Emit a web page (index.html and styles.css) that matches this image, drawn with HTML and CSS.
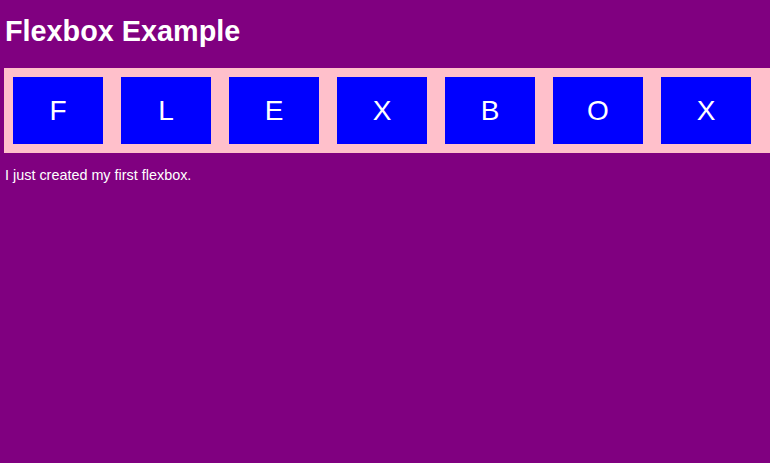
FILE: index.html
```html
<!DOCTYPE html>
<html>
<head>
<meta charset="utf-8">
<link rel="stylesheet" href="styles.css">
</head>
<body>
<h1 class="title">Flexbox Example</h1>
<div class="flex">
  <div class="box">F</div>
  <div class="box">L</div>
  <div class="box">E</div>
  <div class="box">X</div>
  <div class="box">B</div>
  <div class="box">O</div>
  <div class="box">X</div>
</div>
<p class="note">I just created my first flexbox.</p>
</body>
</html>
```
FILE: styles.css
```css
html, body {
  margin: 0;
  background: #800080;
  height: 100%;
}
body {
  padding: 0 0 0 4px;
  font-family: "Liberation Sans", Arial, sans-serif;
  color: #fff;
  box-sizing: border-box;
}
.title {
  margin: 14px 0 20px 1px;
  font-size: 28.8px;
  line-height: 34px;
  font-weight: bold;
}
.flex {
  display: flex;
  background: pink;
}
.box {
  width: 90px;
  height: 67px;
  margin: 9px;
  background: #0000ff;
  display: flex;
  align-items: center;
  justify-content: center;
  font-size: 28px;
  flex-shrink: 0;
}
.note {
  margin: 14px 0 0 1px;
  font-size: 14.4px;
  line-height: 16px;
}
```
